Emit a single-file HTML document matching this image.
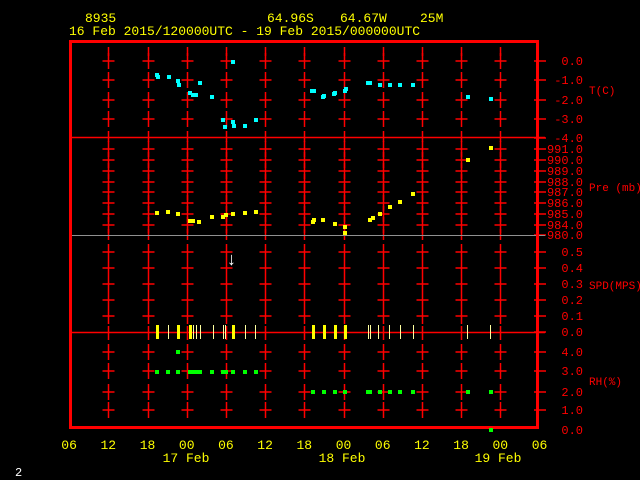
<!DOCTYPE html>
<html><head><meta charset="utf-8"><style>
html,body{margin:0;padding:0;background:#000;width:640px;height:480px;overflow:hidden}
svg{display:block}
text{font-family:"Liberation Mono","DejaVu Sans Mono",monospace}
</style></head><body>
<svg id="s" width="640" height="480" xmlns="http://www.w3.org/2000/svg">
<rect width="640" height="480" fill="#000"/>
<g fill="#ffff00" font-size="13">
<text x="85" y="22">8935</text>
<text x="267" y="22">64.96S</text>
<text x="340" y="22">64.67W</text>
<text x="420" y="22">25M</text>
<text x="69" y="35">16 Feb 2015/120000UTC - 19 Feb 2015/000000UTC</text>
</g>
<g id="grid" stroke="#ff0000" stroke-width="1.5"></g>
<line x1="70" y1="137.5" x2="545" y2="137.5" stroke="#ff0000" stroke-width="1.5"/>
<line x1="70" y1="235.5" x2="545" y2="235.5" stroke="#909090" stroke-width="1"/>
<line x1="70" y1="332.5" x2="545" y2="332.5" stroke="#ff0000" stroke-width="1.5"/>
<rect x="70.5" y="41.5" width="467" height="386" fill="none" stroke="#ff0000" stroke-width="3"/>
<g id="data"></g>
<text x="226" y="265" fill="#fff" font-size="18" font-family="DejaVu Sans">↓</text>
<g id="lab" fill="#ff0000" font-size="12" text-anchor="end"></g>
<g fill="#ff0000" font-size="11">
<text x="589" y="94">T(C)</text>
<text x="589" y="191">Pre (mb)</text>
<text x="589" y="289">SPD(MPS)</text>
<text x="589" y="385">RH(%)</text>
</g>
<g id="bot" fill="#ffff00" font-size="13" text-anchor="middle"></g>
<text x="15" y="476" fill="#fff" font-size="12">2</text>
</svg>
<script>
var NS="http://www.w3.org/2000/svg";
function el(p,t,a,txt){var e=document.createElementNS(NS,t);for(var k in a)e.setAttribute(k,a[k]);if(txt!==undefined)e.textContent=txt;document.getElementById(p).appendChild(e);}
var ys=[61,80,100,119,149,160,171,182,192,203,214,225,252,268,284,300,316,352,371,392,410];
for(var i=0;i<11;i++){var x=Math.round(108.3+i*39.2)+0.5;
 el("grid","line",{x1:x,y1:47,x2:x,y2:56});
 ys.forEach(function(y){el("grid","line",{x1:x,y1:y-8,x2:x,y2:y+8});el("grid","line",{x1:x-6,y1:y,x2:x+6,y2:y});});
 el("grid","line",{x1:x,y1:131,x2:x,y2:142});el("grid","line",{x1:x,y1:229,x2:x,y2:240});el("grid","line",{x1:x,y1:326,x2:x,y2:340});
}
ys.concat([138,235,332]).forEach(function(y){el("grid","line",{x1:534,y1:y,x2:546,y2:y});});
var cy=[[157,75],[158,77],[169,77],[178,81],[179,85],[190,93],[193,95],[196,95],[200,83],[212,97],[223,120],[225,127],[233,62],[233,122],[234,126],[245,126],[256,120],[312,91],[314,91],[323,97],[324,96],[334,94],[335,93],[345,91],[346,89],[368,83],[370,83],[380,85],[390,85],[400,85],[413,85],[468,97],[491,99]];
cy.forEach(function(p){el("data","rect",{x:p[0]-2,y:p[1]-2,width:4,height:4,fill:"#00ffff"});});
var ye=[[157,213],[168,212],[178,214],[190,221],[193,221],[199,222],[212,217],[223,217],[226,215],[233,214],[245,213],[256,212],[313,222],[314,220],[323,220],[335,224],[345,227],[345,233],[370,220],[373,218],[380,214],[390,207],[400,202],[413,194],[468,160],[491,148]];
ye.forEach(function(p){el("data","rect",{x:p[0]-2,y:p[1]-2,width:4,height:4,fill:"#ffff00"});});
var tk=[[157,3],[168,1],[178,3],[190,3],[193,1],[196,1],[200,1],[213,1],[223,1],[225,1],[233,3],[245,1],[255,1],[313,3],[324,3],[335,3],[345,3],[368,1],[370,1],[378,1],[389,1],[400,1],[413,1],[467,1],[490,1]];
tk.forEach(function(p){el("data","rect",{x:p[0]-Math.floor(p[1]/2),y:325,width:p[1],height:14,fill:p[1]>1?"#ffff00":"#ffffa0"});});
var gr=[[178,352],[157,372],[168,372],[178,372],[190,372],[193,372],[196,372],[200,372],[212,372],[223,372],[226,372],[233,372],[245,372],[256,372],[313,392],[324,392],[335,392],[345,392],[368,392],[370,392],[380,392],[390,392],[400,392],[413,392],[468,392],[491,392],[491,430]];
gr.forEach(function(p){el("data","rect",{x:p[0]-2,y:p[1]-2,width:4,height:4,fill:"#00ff00"});});
var L=[[61,"0.0"],[80,"-1.0"],[100,"-2.0"],[119,"-3.0"],[138,"-4.0"],[149,"991.0"],[160,"990.0"],[171,"989.0"],[182,"988.0"],[192,"987.0"],[203,"986.0"],[214,"985.0"],[225,"984.0"],[235,"980.0"],[252,"0.5"],[268,"0.4"],[284,"0.3"],[300,"0.2"],[316,"0.1"],[332,"0.0"],[352,"4.0"],[371,"3.0"],[392,"2.0"],[410,"1.0"],[430,"0.0"]];
L.forEach(function(l){el("lab","text",{x:583,y:l[0]+4},l[1]);});
var B=["06","12","18","00","06","12","18","00","06","12","18","00","06"];
B.forEach(function(b,i){el("bot","text",{x:69.1+i*39.2,y:449},b);});
el("bot","text",{x:186,y:462},"17 Feb");el("bot","text",{x:342,y:462},"18 Feb");el("bot","text",{x:498,y:462},"19 Feb");
</script>
</body></html>
